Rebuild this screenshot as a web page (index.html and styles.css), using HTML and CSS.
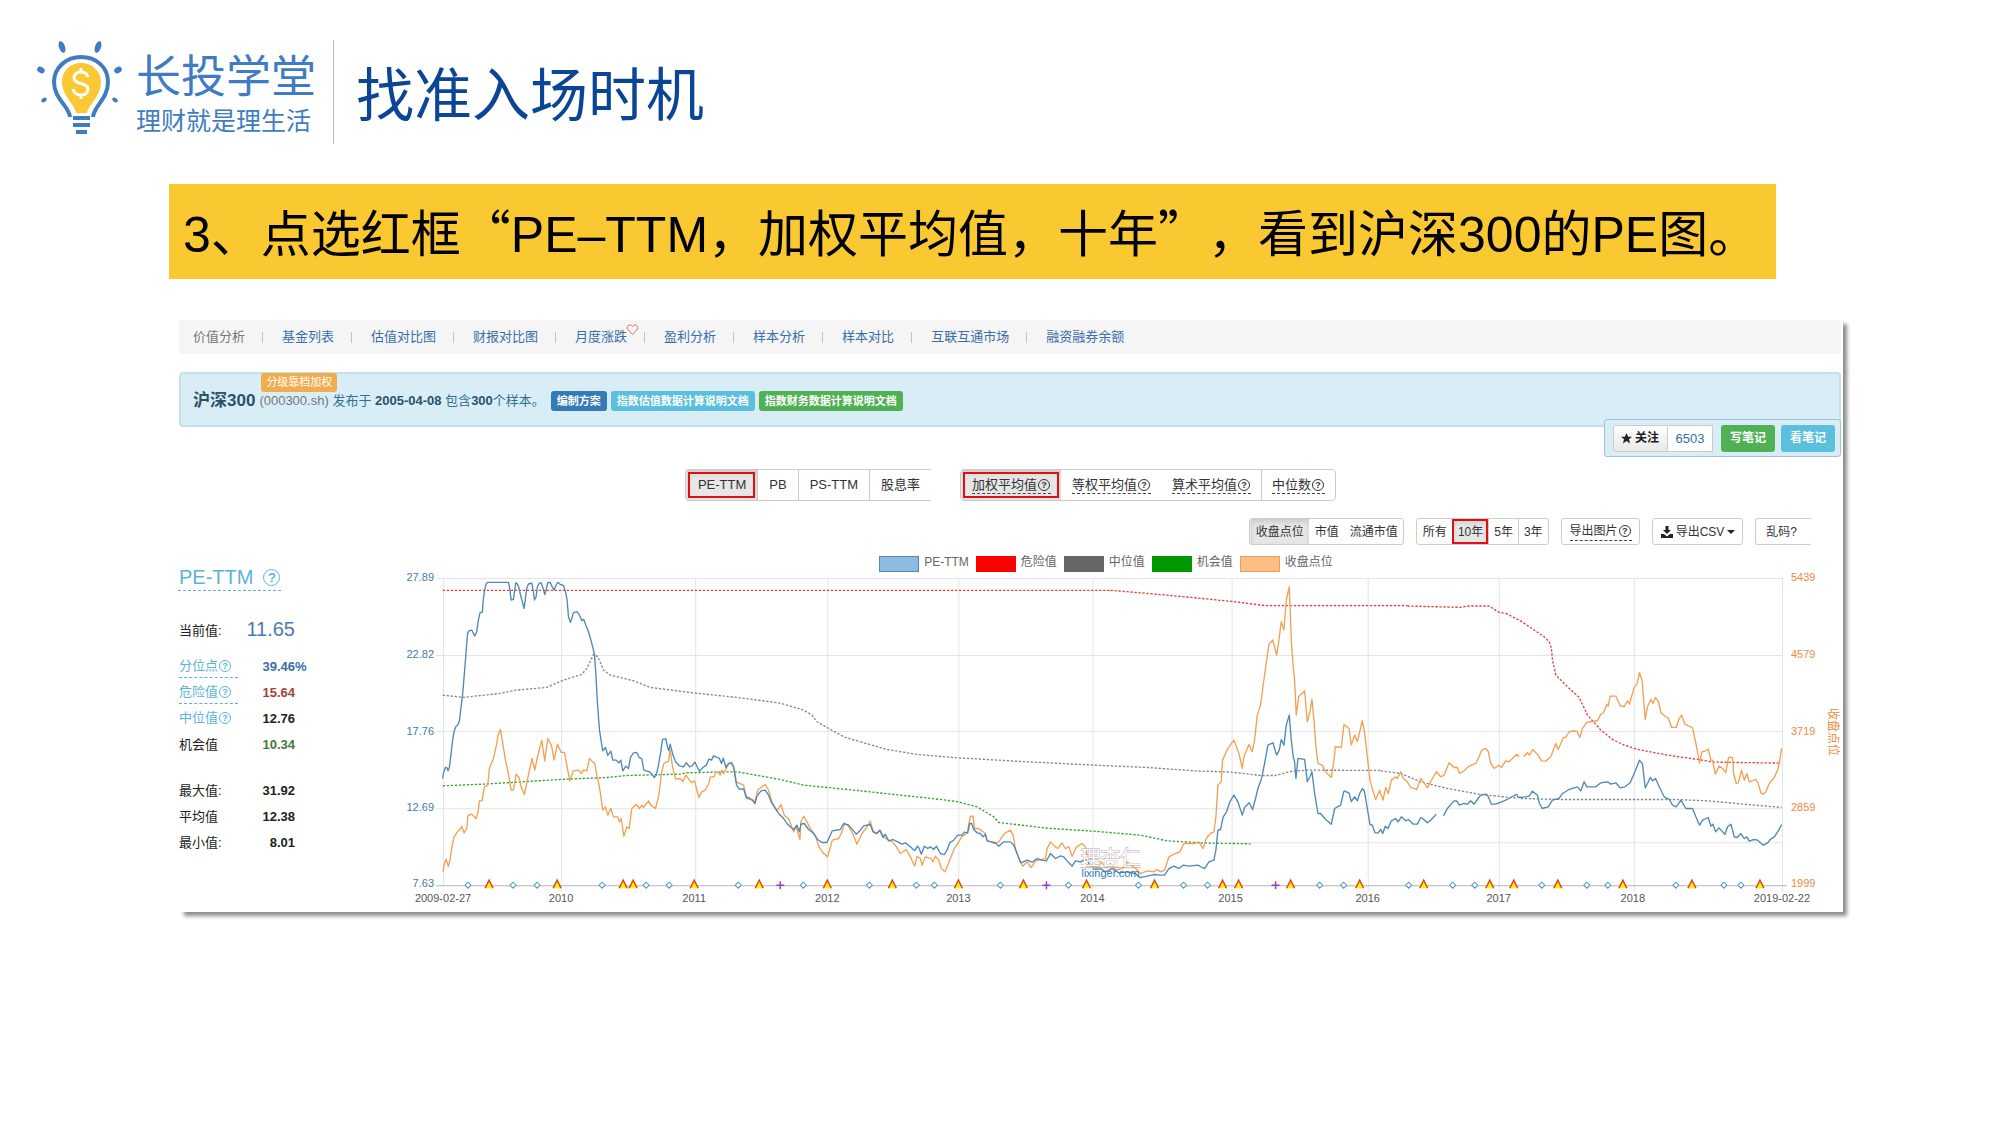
FILE: index.html
```html
<!DOCTYPE html>
<html lang="zh-CN">
<head>
<meta charset="utf-8">
<title>找准入场时机</title>
<link rel="stylesheet" href="styles.css">
</head>
<body>
<header class="header">
  <div class="brand">
    <svg class="bulb" viewBox="0 0 88 96" width="88" height="96" aria-hidden="true">
      <g fill="none" stroke="#3f7cc4" stroke-width="4">
        <path d="M34 77 C33 66 18 59 18 42 C18 27 31 17 45 17 C60 17 72 27 72 42 C72 59 58 66 57 77"/>
        <path d="M37 78h17M37 85h17M40 92h11"/>
      </g>
      <path fill="#fac832" d="M40 73 C39 64 26 56 26 42 C26 31 34 23 45 23 C56 23 65 31 65 42 C65 56 53 64 51 73z"/>
      <path fill="none" stroke="#fff" stroke-width="3" d="M52 37c-1-4-4-5-7-5-4 0-7 2-7 6 0 7 14 4 14 11 0 4-3 6-7 6s-7-2-8-6M45 28v4M45 55v4"/>
      <g fill="#3f7cc4">
        <ellipse cx="26" cy="7" rx="3" ry="6" transform="rotate(-20 26 7)"/>
        <ellipse cx="62" cy="7" rx="3" ry="6" transform="rotate(20 62 7)"/>
        <ellipse cx="5" cy="30" rx="3" ry="4" transform="rotate(-60 5 30)"/>
        <ellipse cx="82" cy="30" rx="3" ry="4" transform="rotate(60 82 30)"/>
        <ellipse cx="8" cy="60" rx="2" ry="3" transform="rotate(50 8 60)"/>
        <ellipse cx="79" cy="60" rx="2" ry="3" transform="rotate(-50 79 60)"/>
      </g>
    </svg>
    <div class="brand-text">
      <span class="brand-name">长投学堂</span>
      <span class="brand-sub">理财就是理生活</span>
    </div>
  </div>
  <h1 class="title">找准入场时机</h1>
</header>

<main>
<p class="banner"><span class="latin">3</span>、点选红框“<span class="latin">PE–TTM</span>，加权平均值，十年”，看到沪深<span class="latin">300</span>的<span class="latin">PE</span>图。</p>

<section class="panel">
  <nav class="nav">
    <a class="current" href="#">价值分析</a><a href="#">基金列表</a><a href="#">估值对比图</a><a href="#">财报对比图</a><a class="liked" href="#">月度涨跌<svg class="heart" viewBox="0 0 13 12" width="13" height="12" aria-hidden="true"><path d="M6.500 10.500 1.500 5C.5 2.500 2 1 4 1c1.200 0 2 .7 2.500 1.500C7 1.700 8 1 9 1c2 0 3.500 1.500 2.500 4z" fill="none" stroke="#dc7060"/></svg></a><a href="#">盈利分析</a><a href="#">样本分析</a><a href="#">样本对比</a><a href="#">互联互通市场</a><a href="#">融资融券余额</a>
  </nav>

  <div class="info">
    <h2>沪深300</h2>
    <span class="desc"><span class="code">(000300.sh)<span class="tag">分级靠档加权</span></span> 发布于 <b>2005-04-08</b> 包含<b>300</b>个样本。</span>
    <a class="label primary" href="#">编制方案</a>
    <a class="label sky" href="#">指数估值数据计算说明文档</a>
    <a class="label green" href="#">指数财务数据计算说明文档</a>
  </div>

  <div class="follow">
    <div class="follow-pair">
      <button class="watch"><svg viewBox="0 0 12 12" width="11" height="11" aria-hidden="true"><path fill="#222" d="m6 0 1.800 4H12L8.700 6.800 9.900 11.400 6 8.800 2.100 11.400 3.300 6.800 0 4h4.200z"/></svg>关注</button><a class="count" href="#">6503</a>
    </div>
    <button class="note green">写笔记</button>
    <button class="note sky">看笔记</button>
  </div>

  <div class="tabs">
    <div class="group open">
      <button class="on marked">PE-TTM</button><button>PB</button><button>PS-TTM</button><button class="wide">股息率</button>
    </div>
    <div class="group">
      <button class="on marked"><span class="hint">加权平均值<i class="q">?</i></span></button><button class="bare"><span class="hint">等权平均值<i class="q">?</i></span></button><button><span class="hint">算术平均值<i class="q">?</i></span></button><button><span class="hint">中位数<i class="q">?</i></span></button>
    </div>
  </div>

  <div class="tools">
    <div class="group small">
      <button class="on">收盘点位</button><button class="bare">市值</button><button>流通市值</button>
    </div>
    <div class="group small">
      <button>所有</button><button class="on marked">10年</button><button>5年</button><button>3年</button>
    </div>
    <div class="group small single"><button><span class="hint">导出图片<i class="q">?</i></span></button></div>
    <div class="group small single"><button><svg viewBox="0 0 12 12" width="12" height="12" aria-hidden="true"><path fill="#222" d="M4.500 0h3v4H10L6 8 2 4h2.500zM0 8h3l3 2.500L9 8h3v4H0z"/></svg>导出CSV<svg class="caret" viewBox="0 0 8 4" width="8" height="4" aria-hidden="true"><path fill="#222" d="M0 0h8L4 4z"/></svg></button></div>
    <div class="group small single open"><button>乱码?</button></div>
  </div>

  <div class="body">
    <aside class="stats">
      <h3><a href="#">PE-TTM <i class="q">?</i></a></h3>
      <dl>
        <div class="now"><dt>当前值:</dt><dd>11.65</dd></div>
        <div><dt><a class="help line" href="#">分位点<i class="q">?</i></a></dt><dd class="blue">39.46<span>%</span></dd></div>
        <div><dt><a class="help line" href="#">危险值<i class="q">?</i></a></dt><dd class="red">15.64</dd></div>
        <div><dt><a class="help" href="#">中位值<i class="q">?</i></a></dt><dd>12.76</dd></div>
        <div><dt>机会值</dt><dd class="ok">10.34</dd></div>
        <div class="gap"><dt>最大值:</dt><dd>31.92</dd></div>
        <div><dt>平均值</dt><dd>12.38</dd></div>
        <div><dt>最小值:</dt><dd>8.01</dd></div>
      </dl>
    </aside>
    <div class="chart">
      <ul class="legend">
        <li class="pe">PE-TTM</li><li class="danger">危险值</li><li class="median">中位值</li><li class="chance">机会值</li><li class="close">收盘点位</li>
      </ul>
      <svg class="plot" viewBox="0 0 1442 342" role="img" aria-label="PE-TTM">
        <defs>
          <path id="tri" d="M-4 4 0 -4 4 4z" fill="#fff200"/>
          <g id="event"><use href="#tri"/><path d="M-4 4 0 -4 4 4" fill="none" stroke="#d8481e" stroke-width="1.500"/></g>
          <path id="dot" d="M-3 0 0 -3 3 0 0 3z" fill="#fff" stroke="#4e9cc0"/>
          <path id="plus" d="M-4 0H4M0 -4V4" stroke="#a23bc4" stroke-width="1.500"/>
        </defs>
        <g stroke="#e4e4e8" fill="none">
          <path d="M36 8.500H1382M36 85.500H1382M36 161.500H1382M36 238.500H1382M830 272.500H1382"/>
          <path d="M43.500 8V315M161.500 8V322M295.500 8V322M427.500 8V322M558.500 8V322M692.500 8V322M831.500 8V322M967.500 8V322M1098.500 8V322M1233.500 8V322M1381.500 8V322"/>
          <path stroke="#b4b4bc" d="M36 315.500H1386"/>
        </g>
        <g fill="none" stroke-width="4" stroke-linejoin="round">
          <g transform="translate(20 -10) scale(.33333)">
            <path class="s-danger" d="M68 91H2070"/>
            <path class="s-median" d="M68 405 130 412 240 400 290 390 380 382 430 360 485 343 500 325 520 283 533 290 550 330 570 345 640 362 690 382 825 399 950 412 1080 429 1150 450 1175 465 1190 485 1270 530 1320 545"/>
            <path class="s-chance" d="M68 677 190 672 420 658 560 652 620 646 780 642 800 638 925 635 950 635 1080 658 1150 675 1240 684 1320 692"/>
            <path class="s-close" d="M69 935 72 915 78 897 85 918 90 900 94 870 102 830 112 815 122 805 125 798 132 818 140 805 144 766 155 762 168 775 174 755 178 722 186 722 193 680 203 675 208 625 220 595 228 560 234 525 241 508 248 550 256 600 265 640 273 690 280 690 288 642 297 652 303 680 313 703 320 670 328 630 336 595 344 630 352 590 365 540 374 602 383 535 394 555 402 600 412 552 423 577 433 577 441 620 449 662 460 632 475 630 484 640 490 630 500 632 508 595 516 603 524 610 530 645 538 680 548 750 556 740 563 765 572 745 580 770 592 770 598 785 603 775 611 828 620 800 627 805 635 745 648 733 658 745 665 735 670 742 685 722 692 735 706 745 716 705 724 640 731 610 745 603 750 570 757 620 766 656 780 655 788 664 797 645 808 660 815 668 823 662 830 690 836 712 845 695 855 690 866 670 870 650 882 650 886 635 892 635 900 645 905 630 910 640 916 628 925 612 935 608 942 625 948 665 970 675 980 715 1000 720 1004 730 1012 690 1022 682 1035 673 1045 690 1055 725 1070 752 1082 733 1092 765 1105 775 1120 815 1128 800 1139 838 1142 785 1150 768 1160 785 1170 805 1185 825 1196 860 1210 880 1222 890 1236 840 1255 835 1265 815 1272 790 1282 795 1295 815 1310 852 1325 820 1340 800 1350 783 1358 812 1368 820 1380 810 1390 830 1400 838 1415 845 1425 855 1440 880 1458 868 1470 890 1483 918"/>
            <path class="s-pe" d="M68 655 70 640 76 622 80 622 84 632 88 622 92 590 97 545 102 515 107 500 113 495 118 483 122 450 128 400 133 340 137 290 140 250 143 218 148 212 155 210 160 220 164 228 170 215 175 180 180 158 187 156 189 125 193 95 198 72 203 67 265 67 269 85 273 120 280 118 284 90 287 68 292 72 297 85 302 108 308 130 312 145 316 115 320 85 325 72 335 69 339 90 343 120 348 110 352 80 357 70 363 68 369 85 374 104 378 90 383 68 390 67 396 80 402 90 408 75 413 67 420 73 430 76 436 95 441 120 445 170 451 187 455 175 460 158 470 155 477 163 485 182 491 178 497 195 505 215 515 250 523 283 527 340 532 430 538 510 545 555 548 572 556 562 563 586 572 573 578 600 588 600 596 608 602 600 608 632 617 618 625 625 631 592 640 578 650 577 657 592 665 596 671 630 688 635 695 642 702 652 708 645 714 620 721 580 727 538 737 536 742 560 746 572 750 552 757 580 766 605 778 617 790 620 798 608 808 620 815 618 824 606 832 622 838 633 848 622 858 615 866 597 874 600 880 587 890 592 897 594 904 610 909 594 917 622 925 610 933 608 940 620 944 645 949 675 957 687 970 686 978 712 985 712 998 722 1004 730 1010 708 1022 692 1035 690 1045 705 1055 730 1075 760 1090 775 1100 790 1110 800 1120 808 1130 795 1137 815 1142 792 1152 790 1165 808 1180 820 1192 838 1205 847 1220 847 1236 812 1260 808 1270 790 1285 795 1308 822 1320 810 1330 797 1350 793 1358 815 1370 820 1378 810 1388 832 1395 822 1405 842 1418 838 1432 845 1445 852 1455 848 1470 860 1483 872"/>
          </g>
          <g transform="translate(460 -30) scale(.33333)">
            <path class="s-danger" d="M750 151 800 155 915 165 1020 175 1112 184 1215 197 1640 197"/>
            <path class="s-median" d="M0 605 80 628 170 643 290 653 500 665 700 675 860 682 1000 692 1112 696 1200 706 1245 706 1290 694 1340 690 1560 691"/>
            <path class="s-chance" d="M0 752 250 779 293 785 350 800 400 830 415 847 560 864 700 873 840 885 920 902 1020 908 1170 911"/>
            <path class="s-close" d="M163 978 170 948 180 955 185 975 195 950 212 955 218 965 225 948 235 960 243 985 254 995 262 975 270 955 282 925 295 905 305 888 320 880 330 828 338 828 342 865 355 865 375 880 380 900 400 910 415 905 432 880 450 870 458 885 465 925 475 955 487 978 500 965 512 982 525 962 555 955 560 925 570 905 585 920 592 925 604 908 615 925 625 920 635 948 648 920 665 910 675 920 680 945 700 970 710 985 722 965 735 980 750 970 765 990 785 985 800 965 825 985 840 1000 860 992 880 995 890 988 900 995 912 990 925 950 940 942 958 935 970 910 1000 910 1015 905 1028 925 1035 900 1042 888 1052 878 1060 875 1066 830 1072 735 1082 725 1086 660 1100 628 1120 600 1135 640 1145 685 1150 650 1165 613 1175 635 1182 600 1190 525 1200 495 1207 440 1217 370 1225 312 1237 300 1248 345 1255 300 1262 245 1270 270 1277 180 1286 140 1292 300 1297 370 1302 420 1307 525 1314 470 1332 452 1340 545 1348 515 1354 478 1360 540 1366 620 1372 670 1385 675 1395 695 1412 712 1420 660 1424 620 1442 622 1450 553"/>
            <path class="s-pe" d="M163 932 171 918 175 922 183 942 192 918 202 925 210 920 220 928 228 918 240 940 252 943 260 930 268 908 280 900 292 885 305 885 312 876 322 878 328 850 334 850 340 868 350 878 360 880 368 890 375 882 380 902 395 905 405 908 415 918 430 905 450 905 460 915 470 940 481 968 500 960 515 966 530 955 545 960 558 962 570 940 585 955 600 947 610 950 620 962 635 978 645 962 660 965 675 957 690 975 705 988 720 985 735 995 755 985 775 998 800 995 825 1000 838 1012 860 1008 880 1003 900 1005 912 1005 925 985 940 978 955 985 968 975 985 978 1012 975 1025 982 1032 985 1045 965 1060 960 1066 930 1072 870 1080 868 1088 830 1098 815 1108 785 1120 765 1132 785 1145 825 1152 802 1166 788 1176 808 1185 775 1192 745 1203 715 1212 670 1222 615 1237 608 1248 645 1256 630 1262 598 1270 615 1277 555 1286 525 1292 600 1298 650 1302 665 1306 715 1312 655 1332 658 1340 725 1348 710 1354 695 1362 760 1372 820 1380 820 1395 838 1412 852 1422 805 1440 795 1450 752"/>
          </g>
          <g transform="translate(780 -10) scale(.33333)">
            <path class="s-danger" d="M680 138 840 142 860 138 925 138 955 157 975 160"/>
            <path class="s-median" d="M600 632 660 640 720 665 800 685 900 703 1010 714"/>
            <path class="s-close" d="M490 493 505 505 512 555 522 525 530 545 545 482 552 520 560 590 568 660 576 690 585 718 597 690 607 720 615 682 623 700 632 660 645 650 650 655 660 635 668 655 680 665 690 682 708 688 720 655 735 675 740 683 755 655 767 635 780 650 790 645 805 608 820 622 830 622 836 640 850 632 865 618 885 610 895 590 903 570 915 565 923 575 930 610 940 625 955 615 962 622 975 602 985 605 1008 582 1015 590"/>
            <path class="s-pe" d="M490 692 505 698 512 724 522 710 530 722 537 700 545 685 551 692 560 745 568 793 575 795 583 818 592 818 600 808 606 820 614 798 622 805 632 782 645 775 652 785 662 770 675 782 683 778 698 792 710 792 720 772 732 780 740 788 750 780 767 762M788 767 800 745 820 722 828 722 836 735 848 730 860 732 870 722 880 732 890 718 900 705 915 702 922 708 932 732 945 732 970 722 990 712 1008 702"/>
          </g>
          <g transform="translate(1100 -10) scale(.33333)">
            <path class="s-danger" d="M15 160 60 183 130 230 145 245 152 265 155 300 165 345 200 380 235 412 260 465 300 510 335 538 370 555 410 568 500 585 590 598 640 606 840 609"/>
            <path class="s-median" d="M60 715 180 718 520 718 620 722 740 733 842 742"/>
            <path class="s-close" d="M68 590 80 578 86 585 96 568 112 585 122 602 135 603 150 590 165 550 172 568 188 532 195 532 205 515 215 512 228 513 237 532 245 505 258 487 290 482 300 462 308 458 318 433 322 438 328 408 345 408 358 437 370 440 380 422 386 432 400 382 408 372 416 338 424 362 433 478 440 440 450 418 456 430 464 412 473 425 480 458 495 470 503 475 512 502 526 502 533 480 542 465 552 492 575 503 585 550 596 608 603 575 615 572 622 567 630 600 635 600 643 642 655 618 665 625 675 637 683 592 695 592 698 640 706 670 712 668 722 630 730 660 738 640 745 665 765 658 772 670 780 698 787 702 795 695 805 670 820 652 832 625 838 590 842 565"/>
            <path class="s-pe" d="M48 702 52 712 75 710 85 708 95 693 110 705 116 730 124 745 142 740 155 720 175 715 185 700 205 688 230 680 240 692 250 665 258 680 285 680 300 668 320 665 330 672 345 668 358 683 372 680 388 668 400 640 416 600 425 612 433 683 440 670 448 652 456 662 464 655 475 680 490 710 505 718 515 735 526 740 540 720 555 745 575 745 585 770 596 795 605 780 622 772 630 798 636 792 644 815 654 803 672 822 680 800 690 792 700 830 708 832 720 820 730 835 738 830 745 843 758 838 770 840 787 855 800 848 808 838 820 830 832 812 842 793"/>
          </g>
        </g>
        <g>
          <use href="#dot" x="68" y="315"/><use href="#dot" x="113" y="315"/><use href="#dot" x="137" y="315"/><use href="#dot" x="202" y="315"/><use href="#dot" x="246" y="315"/><use href="#dot" x="269" y="315"/><use href="#dot" x="338" y="315"/><use href="#dot" x="403" y="315"/><use href="#dot" x="469" y="315"/><use href="#dot" x="516" y="315"/><use href="#dot" x="534" y="315"/><use href="#dot" x="600" y="315"/><use href="#dot" x="668" y="315"/><use href="#dot" x="738" y="315"/><use href="#dot" x="783" y="315"/><use href="#dot" x="807" y="315"/><use href="#dot" x="919" y="315"/><use href="#dot" x="943" y="315"/><use href="#dot" x="1008" y="315"/><use href="#dot" x="1052" y="315"/><use href="#dot" x="1074" y="315"/><use href="#dot" x="1141" y="315"/><use href="#dot" x="1186" y="315"/><use href="#dot" x="1207" y="315"/><use href="#dot" x="1275" y="315"/><use href="#dot" x="1323" y="315"/><use href="#dot" x="1340" y="315"/>
          <use href="#event" x="89" y="314"/><use href="#event" x="157" y="314"/><use href="#event" x="223" y="314"/><use href="#event" x="233" y="314"/><use href="#event" x="294" y="314"/><use href="#event" x="359" y="314"/><use href="#event" x="427" y="314"/><use href="#event" x="492" y="314"/><use href="#event" x="558" y="314"/><use href="#event" x="623" y="314"/><use href="#event" x="686" y="314"/><use href="#event" x="754" y="314"/><use href="#event" x="822" y="314"/><use href="#event" x="838" y="314"/><use href="#event" x="890" y="314"/><use href="#event" x="959" y="314"/><use href="#event" x="1023" y="314"/><use href="#event" x="1089" y="314"/><use href="#event" x="1113" y="314"/><use href="#event" x="1157" y="314"/><use href="#event" x="1222" y="314"/><use href="#event" x="1291" y="314"/><use href="#event" x="1359" y="314"/>
          <use href="#plus" x="380" y="315"/><use href="#plus" x="646" y="315"/><use href="#plus" x="875" y="315"/>
        </g>
        <path d="M680 297.500H740" stroke="#e0a878"/>
        <text class="mark" x="710" y="295">理杏仁</text>
        <text class="site" x="710" y="307">lixinger.com</text>
        <g class="axis left">
          <text x="34" y="11">27.89</text><text x="34" y="88">22.82</text><text x="34" y="165">17.76</text><text x="34" y="241">12.69</text><text x="34" y="317">7.63</text>
        </g>
        <g class="axis right">
          <text x="1390" y="11">5439</text><text x="1390" y="88">4579</text><text x="1390" y="165">3719</text><text x="1390" y="241">2859</text><text x="1390" y="317">1999</text>
        </g>
        <g class="axis date">
          <text x="43" y="332">2009-02-27</text><text x="161" y="332">2010</text><text x="294" y="332">2011</text><text x="427" y="332">2012</text><text x="558" y="332">2013</text><text x="692" y="332">2014</text><text x="830" y="332">2015</text><text x="967" y="332">2016</text><text x="1098" y="332">2017</text><text x="1232" y="332">2018</text><text x="1381" y="332">2019-02-22</text>
        </g>
        <text class="axis-title" transform="translate(1428 138) rotate(90)">收盘点位</text>
      </svg>
    </div>
  </div>
</section>
</main>
</body>
</html>
```
FILE: styles.css
```css
* { box-sizing: border-box; }
body {
  margin: 0;
  background: #fff;
  color: #333;
  font: 13px/18px "Liberation Sans", "Noto Sans CJK SC", sans-serif;
}
a { color: #3a6ea8; text-decoration: none; }
h1, h2, h3, p, dl, dd, ul { margin: 0; padding: 0; }
button { font: inherit; color: #333; margin: 0; cursor: pointer; }
i { font-style: normal; }

.header { display: flex; height: 184px; padding: 40px 36px; }
.brand { display: flex; gap: 12px; height: 104px; padding-right: 17px; border-right: 1px solid #b0b4bc; }
.brand-text { display: flex; flex-direction: column; padding-top: 12px; color: #3f7cc4; }
.brand-name { font-size: 45px; line-height: 52px; }
.brand-sub { font-size: 25px; line-height: 34px; }
.title {
  margin-left: 22px; padding-top: 11px; color: #0b4595;
  font: 400 58px/80px "Noto Sans CJK SC", sans-serif;
}

.banner {
  height: 95px; margin: 0 224px 39px 169px; padding: 0 14px; background: #fac931; color: #000;
  font: 400 50px/93px "Noto Sans CJK SC", sans-serif; text-spacing-trim: space-all; white-space: nowrap;
}
.latin { font-family: "Liberation Sans", sans-serif; line-height: 1; }

.panel {
  display: flex; flex-direction: column;
  margin: 0 157px 60px 178px; padding-top: 2px;
  box-shadow: 5px 5px 4px -1px #8c8c8c;
}
.nav { display: flex; gap: 37px; height: 34px; padding: 8px 14px; margin: 0 2px 0 1px; background: #f5f5f5; }
.nav a { position: relative; }
.nav a + a::before { content: ""; position: absolute; left: -20px; top: 4px; height: 11px; border-left: 1px solid #c4c4c4; }
.nav .current { color: #777; }
.heart { position: absolute; right: -12px; top: -4px; }

.info {
  display: flex; align-items: center; gap: 4px; height: 55px; margin: 18px 2px 0 1px; padding: 3px 12px 0;
  background: #d9edf7; border: 2px solid #c4e2ea; border-radius: 4px; color: #31708f;
}
.info h2 { color: #2b5268; font-size: 17px; line-height: 20px; }
.info b { color: #2b5268; }
.desc { margin-right: 2px; white-space: nowrap; }
.code { position: relative; color: #777; }
.tag {
  position: absolute; left: 2px; top: -20px; padding: 0 5px; border-radius: 3px;
  background: #f0ad4e; color: #fff; font-size: 11px; line-height: 19px; white-space: nowrap;
}
.label { padding: 0 6px; border-radius: 3px; color: #fff; font-size: 11px; font-weight: 700; line-height: 20px; white-space: nowrap; }
.primary { background: #337ab7; }
.sky { background: #5bc0de; }
.green { background: #50b154; }

.follow {
  display: flex; align-items: center; align-self: flex-end; gap: 6px; height: 38px; margin: -8px 2px 0 0; padding: 0 5px 0 8px;
  background: #d9edf7; border: 1px solid #9cc4d6; border-radius: 3px;
}
.follow-pair { display: flex; height: 27px; margin-right: 2px; }
.watch {
  display: flex; align-items: center; gap: 3px; width: 55px; padding: 0 7px;
  background: linear-gradient(#fff, #e8e8e8); border: 1px solid #ccc; border-radius: 3px 0 0 3px; color: #222; font-size: 12px; font-weight: 700;
}
.count { width: 45px; border: 1px solid #ccc; border-left: 0; background: #fff; text-align: center; line-height: 25px; }
.note { width: 54px; height: 27px; padding: 0; border: 0; border-radius: 3px; color: #fff; font-size: 12px; font-weight: 700; }

.tabs { display: flex; justify-content: center; gap: 29px; margin-top: 12px; }
.group { display: flex; height: 32px; border: 1px solid #ccc; border-radius: 4px; }
.group button { display: flex; align-items: center; gap: 3px; padding: 0 10px; border: 0; border-left: 1px solid #ccc; background: none; white-space: nowrap; }
.group button:first-child, .group .bare { border-left-color: transparent; }
.group .bare + button { border-left-color: transparent; }
.group.open { border-right: 0; border-radius: 4px 0 0 4px; }
.group .on { background: #e6e6e6; box-shadow: inset 0 3px 5px rgba(0, 0, 0, .12); }
.group .marked { outline: 2px solid #e01010; outline-offset: -4px; }
.tabs .open button { padding: 0 11px; }
.tabs .bare + button + button { border-left-color: #ccc; }
.hint { display: inline-flex; align-items: center; border-bottom: 1px dashed #444; line-height: 17px; }
.q {
  display: inline-block; width: 12px; height: 12px; margin: 0 1px; border: 1px solid currentColor; border-radius: 50%;
  font: 700 9px/10px "Liberation Sans", sans-serif; text-align: center;
}

.tools { display: flex; justify-content: flex-end; gap: 12px; margin: 17px 31px 0 0; }
.group.small { height: 27px; border-radius: 3px; font-size: 12px; }
.small button { padding: 0 5px; }
.small .marked { outline-offset: -2px; }
.single button { padding: 0 7px; }
.single.open button { padding: 0 15px 0 9px; }

.body { display: flex; margin-top: 11px; }
.stats { flex: 0 0 222px; padding-top: 9px; }
.stats h3 { font-size: 20px; font-weight: 400; line-height: 24px; }
.stats h3 a { display: inline-flex; align-items: center; gap: 10px; padding: 0 1px; border-bottom: 1px dashed #5bb4d8; color: #5bb4d8; line-height: 25px; }
.stats h3 .q { width: 17px; height: 17px; margin: 0; font-size: 13px; line-height: 15px; }
.stats dl > div { display: flex; justify-content: space-between; width: 117px; height: 26px; line-height: 26px; padding-left: 1px; color: #222; }
.stats dd { font-weight: 700; position: relative; }
.stats dd span { position: absolute; left: 100%; }
.stats .now { height: 36px; margin-top: 27px; }
.stats .now dd { color: #4a7ab4; font-size: 20px; font-weight: 400; line-height: 22px; }
.stats .gap { margin-top: 20px; }
.help { display: flex; align-items: center; width: 59px; height: 24px; color: #5bb4d8; line-height: 22px; }
.line { border-bottom: 1px dashed #5bb4d8; }
.stats .blue { color: #3a6ea8; }
.stats .red { color: #a93f3c; }
.stats .ok { color: #3f7a40; }

.chart { flex: 1; min-width: 0; }
.legend { display: flex; justify-content: center; gap: 7px; height: 14px; padding-right: 31px; list-style: none; color: #666; font-size: 12px; line-height: 12px; }
.legend li { display: flex; gap: 5px; white-space: nowrap; }
.legend li::before { content: ""; width: 38px; height: 14px; border: 1px solid; }
.legend .pe::before { background: #8ebbe0; border-color: #5588b0; }
.legend .danger::before { background: #f00; border-color: #f00; }
.legend .median::before { background: #666; }
.legend .chance::before { background: #090; border-color: #090; }
.legend .close::before { background: #ffbe84; border-color: #e8a060; }

.plot { display: block; width: 100%; height: auto; }
.s-pe { stroke: #4d88b8; }
.s-close { stroke: #f4a052; }
.s-danger { stroke: #f03a3a; stroke-dasharray: 7 5; }
.s-median { stroke: #888; stroke-dasharray: 7 5; }
.s-chance { stroke: #35a535; stroke-dasharray: 7 5; }
.axis { font-size: 11px; }
.left { text-anchor: end; fill: #3d7ab0; }
.right { fill: #f08a3c; }
.date { text-anchor: middle; fill: #555; }
.axis-title { font-size: 12px; fill: #f08a3c; }
.mark { font-size: 20px; text-anchor: middle; fill: #fff; stroke: #b8a8b4; stroke-width: 1px; paint-order: stroke; }
.site { font-size: 11px; text-anchor: middle; fill: #2a7ab8; }
```
